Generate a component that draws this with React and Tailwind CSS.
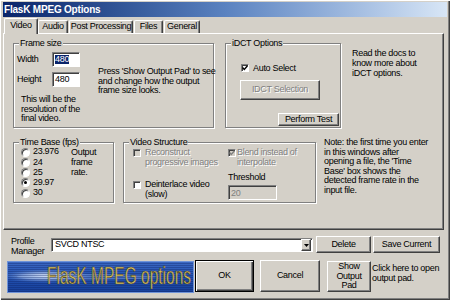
import React from "react";

const raised =
  "bg-[#d4d0c8] border border-t-white border-l-white border-r-[#404040] border-b-[#404040] shadow-[inset_-1px_-1px_0_#808080]";
const sunken =
  "border border-t-[#808080] border-l-[#808080] border-r-white border-b-white shadow-[inset_1px_1px_0_#404040]";
const groupBox =
  "relative border border-[#808080] shadow-[inset_1px_1px_0_#fff,1px_1px_0_#fff]";
const disabledText = "text-[#808080] [text-shadow:1px_1px_0_#fff]";

function Group({ label, className, children }) {
  return (
    <div className={`${groupBox} ${className}`}>
      <span className="absolute -top-[6px] left-[5px] bg-[#d4d0c8] px-[1px] leading-[10px]">
        {label}
      </span>
      {children}
    </div>
  );
}

function Check({ checked, disabled }) {
  return (
    <span
      className={`${sunken} flex h-[8px] w-[8px] shrink-0 items-center justify-center ${
        disabled ? "bg-[#d4d0c8]" : "bg-white"
      }`}
    >
      {checked && (
        <svg width="6" height="6" viewBox="0 0 6 6">
          <path
            d="M0.5 2.5 L2.3 4.5 L5.5 0.8"
            fill="none"
            stroke={disabled ? "#808080" : "#000"}
            strokeWidth="1.4"
          />
        </svg>
      )}
    </span>
  );
}

function Radio({ checked, label }) {
  return (
    <div className="flex h-[10.25px] items-center">
      <span className="flex h-[9px] w-[9px] shrink-0 items-center justify-center rounded-full border border-t-[#808080] border-l-[#808080] border-r-white border-b-white bg-white shadow-[inset_1px_1px_0_#404040]">
        {checked && <span className="h-[3px] w-[3px] rounded-full bg-black" />}
      </span>
      <span className="ml-[3px]">{label}</span>
    </div>
  );
}

function Tab({ label, active, className }) {
  return (
    <div
      className={`flex items-center justify-center rounded-t-[2px] border-t border-l border-r border-t-white border-l-white border-r-[#404040] bg-[#d4d0c8] shadow-[inset_-1px_0_0_#808080] ${
        active ? "relative z-10 -mb-px h-[16px] pb-[1px]" : "h-[13px]"
      } ${className}`}
    >
      {label}
    </div>
  );
}

function Logo() {
  return (
    <div className="relative ml-[4px] mt-[1px] h-[32px] w-[187px] shrink-0 overflow-hidden">
      <svg width="187" height="32" viewBox="0 0 187 32" className="block">
        <defs>
          <linearGradient id="lbg" x1="0" y1="0" x2="0" y2="1">
            <stop offset="0" stopColor="#3d6ac4" />
            <stop offset="0.5" stopColor="#2150b0" />
            <stop offset="1" stopColor="#17409a" />
          </linearGradient>
          <radialGradient id="glow" cx="0.5" cy="0.5" r="0.5">
            <stop offset="0" stopColor="#f4f8ff" stopOpacity="0.95" />
            <stop offset="0.5" stopColor="#b8cdf0" stopOpacity="0.6" />
            <stop offset="1" stopColor="#5a86d0" stopOpacity="0" />
          </radialGradient>
          <pattern id="scan" width="4" height="2" patternUnits="userSpaceOnUse">
            <rect width="4" height="1" fill="#0a2060" opacity="0.35" />
          </pattern>
        </defs>
        <rect width="187" height="32" fill="url(#lbg)" />
        <ellipse cx="38" cy="15" rx="46" ry="7" fill="url(#glow)" />
        <ellipse cx="80" cy="16" rx="70" ry="3" fill="#9fbbe8" opacity="0.35" />
        <rect width="187" height="32" fill="url(#scan)" />
        <rect x="0.5" y="0.5" width="186" height="31" fill="none" stroke="#6f93d8" />
      </svg>
      <span className="absolute left-[40px] top-[1px] origin-left scale-x-[0.675] whitespace-nowrap text-[23px] leading-[28px] tracking-normal text-[#dcc86a] [-webkit-text-stroke:0.6px_#4a3c18]">
        FlasK MPEG options
      </span>
    </div>
  );
}

export default function App() {
  return (
    <div className="h-[300px] w-[450px] overflow-hidden bg-[#d4d0c8] px-[3px] pt-[2px] font-['Liberation_Sans',Arial,sans-serif] text-[9px] leading-[9.6px] tracking-[-0.3px] text-black shadow-[inset_1px_1px_0_#fff,inset_-1px_-1px_0_#404040,inset_-2px_-2px_0_#808080]">
      {/* title bar */}
      <div className="flex h-[15px] w-[444px] items-center bg-gradient-to-r from-[#0a246a] via-[#5a82c0] to-[#d8e6f6] pl-[1px] text-[10px] font-bold tracking-[-0.2px] text-white">
        FlasK MPEG Options
      </div>

      {/* tabs */}
      <div className="flex h-[16px] items-end">
        <Tab label="Video" active className="ml-[1px] w-[34px]" />
        <Tab label="Audio" className="w-[30px]" />
        <Tab label="Post Processing" className="ml-[1px] w-[64px]" />
        <Tab label="Files" className="ml-[1px] w-[29px]" />
        <Tab label="General" className="ml-[1px] w-[36px]" />
      </div>

      {/* tab panel */}
      <div className="h-[197px] w-[441px] border border-t-white border-l-white border-r-[#404040] border-b-[#404040] shadow-[inset_-1px_-1px_0_#808080]">
        <div className="flex">
          <Group label="Frame size" className="ml-[9px] mt-[9px] flex h-[85px] w-[201px]">
            <div className="ml-[3px] w-[81px] shrink-0">
              <div className="mt-[8px] flex items-center">
                <span className="w-[35px]">Width</span>
                <span className={`${sunken} flex h-[15px] w-[28px] items-center bg-white pl-[2px]`}>
                  <span className="bg-[#0a246a] text-white">480</span>
                </span>
              </div>
              <div className="mt-[5px] flex items-center">
                <span className="w-[35px]">Height</span>
                <span className={`${sunken} flex h-[15px] w-[28px] items-center bg-white pl-[2px]`}>
                  480
                </span>
              </div>
              <p className="ml-[4px] mt-[8px] whitespace-nowrap">
                This will be the
                <br />
                resolution of the
                <br />
                final video.
              </p>
            </div>
            <p className="mt-[23px] whitespace-nowrap">
              Press 'Show Output Pad' to see
              <br />
              and change how the output
              <br />
              frame size looks.
            </p>
          </Group>

          <Group label="iDCT Options" className="ml-[11px] mt-[9px] h-[85px] w-[116px]">
            <div className="ml-[15px] mt-[19px] flex items-start leading-[10px]">
              <span className="mt-[1px]">
                <Check checked />
              </span>
              <span className="ml-[4px]">Auto Select</span>
            </div>
            <div
              className={`${raised} ml-[14px] mt-[7px] flex h-[20px] w-[80px] items-center justify-center ${disabledText}`}
            >
              IDCT Selection
            </div>
            <div className={`${raised} ml-[52px] mt-[13px] flex h-[13px] w-[61px] items-center justify-center`}>
              Perform Test
            </div>
          </Group>

          <p className="ml-[11px] mt-[14px] whitespace-nowrap leading-[10px]">
            Read the docs to
            <br />
            know more about
            <br />
            iDCT options.
          </p>
        </div>

        <div className="flex items-start">
          <Group label="Time Base (fps)" className="ml-[9px] mt-[14px] flex h-[61px] w-[101px]">
            <div className="ml-[7px] mt-[4px] w-[50px] shrink-0">
              <Radio label="23.976" />
              <Radio label="24" />
              <Radio label="25" />
              <Radio label="29.97" checked />
              <Radio label="30" />
            </div>
            <p className="mt-[4px] leading-[10px]">
              Output
              <br />
              frame
              <br />
              rate.
            </p>
          </Group>

          <Group label="Video Structure" className="ml-[9px] mt-[14px] flex h-[61px] w-[193px] leading-[10px]">
            <div className="ml-[9px] mt-[4px] w-[95px] shrink-0">
              <div className="flex items-start">
                <span className="mt-[2px]">
                  <Check disabled />
                </span>
                <span className={`ml-[4px] whitespace-nowrap ${disabledText}`}>
                  Reconstruct
                  <br />
                  progressive images
                </span>
              </div>
              <div className="mt-[12px] flex items-start">
                <span className="mt-[2px]">
                  <Check />
                </span>
                <span className="ml-[4px] whitespace-nowrap">
                  Deinterlace video
                  <br />
                  (slow)
                </span>
              </div>
            </div>
            <div className="mt-[4px]">
              <div className="flex items-start">
                <span className="mt-[2px]">
                  <Check checked disabled />
                </span>
                <span className={`ml-[1px] whitespace-nowrap ${disabledText}`}>
                  Blend instead of
                  <br />
                  interpolate
                </span>
              </div>
              <p className="mt-[5px]">Threshold</p>
              <div className={`${sunken} mt-[3px] flex h-[15px] w-[49px] items-center bg-[#d4d0c8] pl-[2px] text-[#808080]`}>
                20
              </div>
            </div>
          </Group>

          <p className="ml-[8px] mt-[10px] whitespace-nowrap">
            Note: the first time you enter
            <br />
            in this windows after
            <br />
            opening a file, the 'Time
            <br />
            Base' box shows the
            <br />
            detected frame rate in the
            <br />
            input file.
          </p>
        </div>
      </div>

      {/* profile manager row */}
      <div className="mt-[6px] flex items-start">
        <p className="ml-[8px] w-[40px] leading-[10px]">
          Profile
          <br />
          Manager
        </p>
        <div className={`${sunken} mt-[2px] flex h-[14px] w-[262px] items-center justify-between bg-white pl-[3px]`}>
          <span>SVCD NTSC</span>
          <span className={`${raised} mr-[1px] flex h-[12px] w-[10px] items-center justify-center`}>
            <svg width="5" height="3" viewBox="0 0 5 3">
              <path d="M0 0 H5 L2.5 3 Z" fill="#000" />
            </svg>
          </span>
        </div>
        <div className={`${raised} ml-[3px] flex h-[17px] w-[55px] items-center justify-center`}>Delete</div>
        <div className={`${raised} ml-[2px] flex h-[17px] w-[67px] items-center justify-center`}>
          Save Current
        </div>
      </div>

      {/* bottom row */}
      <div className="mt-[4px] flex items-start">
        <Logo />
        <div className="ml-[1px] flex h-[32px] w-[59px] items-center justify-center border border-black bg-[#d4d0c8] shadow-[inset_1px_1px_0_#fff,inset_-1px_-1px_0_#404040,inset_-2px_-2px_0_#808080]">
          OK
        </div>
        <div className={`${raised} ml-[6px] flex h-[32px] w-[60px] items-center justify-center`}>Cancel</div>
        <div className={`${raised} ml-[7px] mt-[1px] flex h-[31px] w-[44px] flex-col items-center justify-center text-center`}>
          Show
          <br />
          Output
          <br />
          Pad
        </div>
        <p className="ml-[1px] mt-[3px] whitespace-nowrap leading-[10px]">
          Click here to open
          <br />
          output pad.
        </p>
      </div>
    </div>
  );
}
